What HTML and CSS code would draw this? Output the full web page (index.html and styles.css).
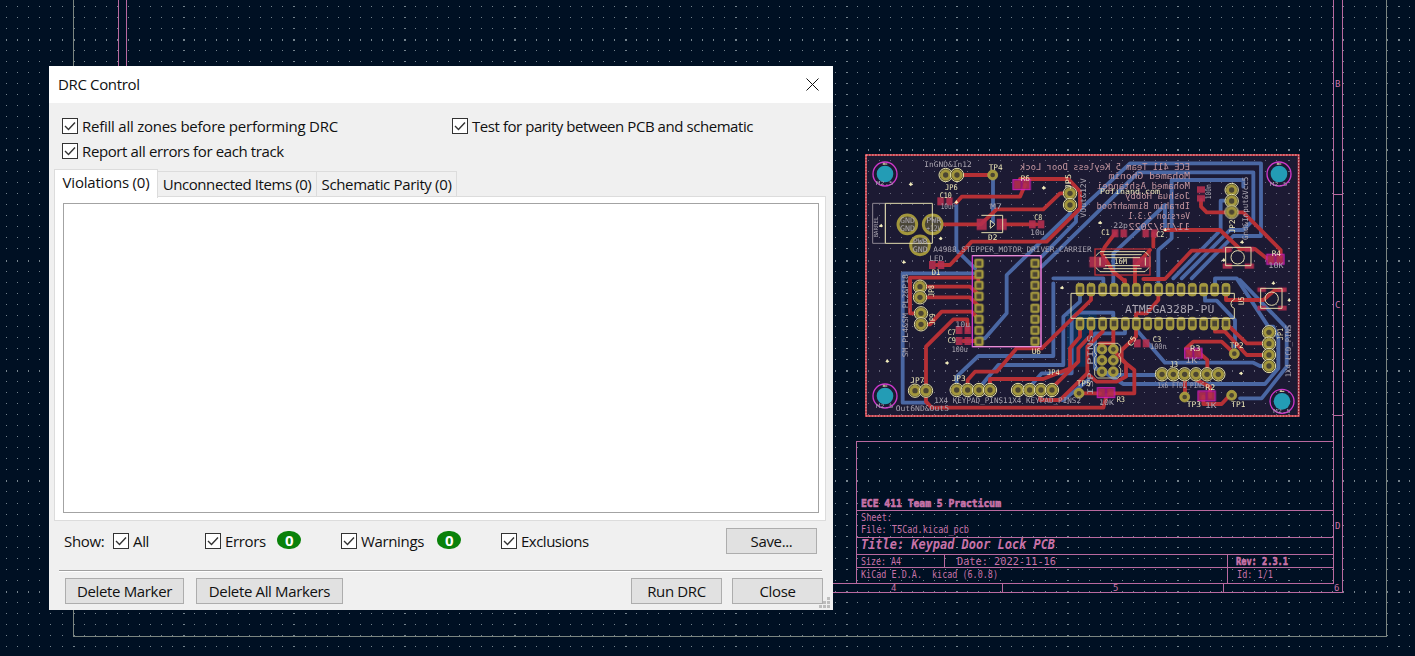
FILE: index.html
```html
<!DOCTYPE html>
<html lang="en">
<head>
<meta charset="utf-8">
<title>DRC Control</title>
<link rel="stylesheet" href="styles.css">
</head>
<body>
<main class="workspace">
<svg class="sheet" viewBox="0 0 1415 656" width="1415" height="656">
  <path id="grid" class="grid"/>
  <path class="page-edge" d="M73.5 0V636.5H1386.5V0"/>
  <path class="frame" d="M118.5 0V592.5H1342.5V0M126.5 0V583.5H1333.5V0M1333 194.5h9M1333 415.500h9M1333 441.500H856.500V583M856 510.500h477M856 537.500h477M856 554.500h477M856 567.500h477M944.500 554v13M1227.500 554v29M1002.500 583v9M1223.500 583v9"/>
  <g class="frame-text">
    <text class="heavy" x="861" y="507" textLength="140">ECE 411 Team 5 Practicum</text>
    <text x="861" y="520.500" textLength="31">Sheet:</text>
    <text x="861" y="532.500" textLength="108">File: T5Cad.kicad_pcb</text>
    <text class="title" x="861" y="549" textLength="194">Title: Keypad Door Lock PCB</text>
    <text x="861" y="565" textLength="40">Size: A4</text>
    <text x="957" y="565" textLength="99">Date: 2022-11-16</text>
    <text class="heavy" x="1236" y="565" textLength="52">Rev: 2.3.1</text>
    <text x="861" y="578" textLength="61">KiCad E.D.A.</text>
    <text x="932" y="578" textLength="66">kicad (6.0.8)</text>
    <text x="1237" y="578" textLength="36">Id: 1/1</text>
    <g class="ruler"><text x="891" y="591">4</text><text x="1113" y="591">5</text><text x="1334" y="591">6</text><text x="1335" y="87">B</text><text x="1335" y="308">C</text><text x="1335" y="529">D</text></g>
  </g>
</svg>
<svg class="board" viewBox="0 0 1320 810" width="440" height="270">
  <defs>
    <g id="pin"><circle r="20" class="ring"/><circle r="16" class="gold"/><circle r="8" class="hole"/></g>
    <g id="dip"><rect x="-12" y="-19" width="24" height="38" rx="9" class="gold"/><rect x="-7" y="-9" width="14" height="17" class="hole"/></g>
    <g id="sq"><rect x="-13" y="-13" width="26" height="26" rx="5" class="gold"/><rect x="-7" y="-7" width="14" height="14" class="hole"/></g>
    <g id="isp"><circle r="15" class="gold"/><circle r="7" class="hole"/></g>
    <g id="mount"><circle r="36" class="mask"/><circle r="25" class="drill"/><path class="silk" d="M-7-30h14M-3-34v6"/></g>
    <g id="power"><circle r="28" class="big-hole"/></g>
    <g id="smd"><rect x="-23" y="-12" width="20" height="24"/><rect x="3" y="-12" width="20" height="24"/></g>
    <g id="smd-mask"><rect x="-26" y="-15" width="52" height="30" class="mask-fill"/><use href="#smd"/></g>
  </defs>
  <rect class="zone" x="18" y="14" width="1300" height="786"/>
  <path id="board-grid" class="board-grid"/>
  <g class="pour"><path d="M620 480h90v70h-30v100h-60z"/></g>
  <g class="back">
    <path d="M399 90V215M289 160V300L345 355M128 370H340M128 370V758H200"/>
    <path d="M630 165V190L440 375V490L375 565H357"/>
    <path d="M545 320L648 215V190L810 40H1203V258H1120L995 385"/>
    <path d="M545 350L835 67H1180V210L1150 240H1110L965 385"/>
    <path d="M935 90H1150V110M935 90V265L895 300V400M1115 152H1082V240L940 385"/>
    <path d="M915 235V165L760 310V410"/>
    <path d="M1065 405V385H1130L1225 530H1240L1255 565V655L1215 702H790L730 665"/>
    <path d="M580 400V618H355L290 680V720M580 385H730V405"/>
    <path d="M660 420V455L610 500V645H415L357 715M760 520V488H655L635 505V670H545L510 710"/>
    <path d="M795 520V550H705V655L760 675H905M830 540L915 638H1180L1200 648H1227"/>
    <path d="M685 690L610 750H540M1035 420V452H1070L1125 510V590M1140 390L1280 535V650L1205 745H1140"/>
  </g>
  <g class="front">
    <path d="M290 75H398M289 158L305 140H480L495 105M245 223H362L410 178H550L600 130H625"/>
    <path d="M230 345H270L335 275H560L660 175V125L625 87H480M430 223H530M150 400V383H355V400"/>
    <path d="M765 250L735 290 725 310 760 365 790 390M870 300L825 350V400"/>
    <path d="M1023 150V170L1040 187H1150L1262 300V320M915 240H1080L1140 297H1185L1220 325M1105 302H995L915 387H850M880 250V290"/>
    <path d="M150 390V490H180M180 410H330L357 435M180 442H330L357 470M180 523H210L245 485H335L357 508M198 720V590L280 508H322V540M310 573H357"/>
    <path d="M198 720V755L215 773H730L740 735M323 715V690L345 665H410L470 595H545L693 450V420"/>
    <path d="M390 715V687H550L630 655V595L660 560V520M575 715L655 635V595L693 555V520M540 720V750H600L682 670V590L728 545V520"/>
    <path d="M682 670L710 695H770L798 680V640L760 600M720 600V580H760V520M828 520V560L785 600V630L823 660V730H750M660 730H720M828 520V490H860L895 450V425M795 390V420"/>
    <path d="M1098 425V450H1210L1245 420H1270M1065 520V545H1095L1160 615H1227M1098 520L1160 580H1227M990 610L978 595 1000 575H1085L1120 608M1020 610L1042 630V670M975 670V735M1010 673V690L1050 710V740M1030 740V762H1085L1110 735"/>
  </g>
  <g class="smds">
    <use href="#smd" x="255" y="154"/><use href="#smd" x="230" y="345"/><use href="#smd" x="530" y="223"/><use href="#smd" x="778" y="250"/><use href="#smd" x="870" y="250"/>
    <use href="#smd" x="310" y="540"/><use href="#smd" x="310" y="573"/><use href="#smd" transform="translate(1023 132) rotate(90)"/><use href="#smd" x="845" y="580"/>
    <use href="#smd-mask" x="485" y="104"/><use href="#smd-mask" x="738" y="728"/><use href="#smd-mask" x="1000" y="610"/><use href="#smd-mask" x="1040" y="738"/><use href="#smd-mask" x="1246" y="328"/>
    <rect x="350" y="206" width="30" height="34"/><rect x="410" y="206" width="30" height="34"/><rect x="688" y="320" width="52" height="32"/><rect x="818" y="320" width="52" height="32"/>
    <path d="M1088 290h28v16h-28zM1154 290h28v16h-28zM1088 340h28v16h-28zM1154 340h28v16h-28zM1192 412h26v14h-26zM1254 412h26v14h-26zM1192 467h26v14h-26zM1254 467h26v14h-26z"/>
  </g>
  <g>
    <use href="#mount" x="75" y="72"/><use href="#mount" x="1257" y="72"/><use href="#mount" x="75" y="738"/><use href="#mount" x="1266" y="754"/>
    <use href="#power" x="142" y="223"/><use href="#power" x="218" y="223"/><use href="#power" x="180" y="286"/>
    <use href="#pin" x="257" y="75"/><use href="#pin" x="291" y="75"/><use href="#isp" x="398" y="75"/>
    <use href="#pin" x="630" y="130"/><use href="#pin" x="630" y="165"/>
    <use href="#pin" x="1115" y="120"/><use href="#pin" x="1115" y="153"/><use href="#pin" x="1115" y="186"/>
    <use href="#pin" x="180" y="410"/><use href="#pin" x="180" y="442"/><use href="#pin" x="183" y="490"/><use href="#pin" x="183" y="523"/>
    <use href="#pin" x="165" y="722"/><use href="#pin" x="198" y="722"/>
    <use href="#pin" x="290" y="720"/><use href="#pin" x="323" y="720"/><use href="#pin" x="357" y="720"/><use href="#pin" x="390" y="720"/>
    <use href="#pin" x="474" y="720"/><use href="#pin" x="509" y="720"/><use href="#pin" x="543" y="720"/><use href="#pin" x="576" y="720"/>
    <use href="#isp" x="657" y="730"/><use href="#isp" x="1123" y="611"/><use href="#isp" x="974" y="741"/><use href="#isp" x="1115" y="736"/>
    <use href="#pin" x="906" y="673"/><use href="#pin" x="940" y="673"/><use href="#pin" x="974" y="673"/><use href="#pin" x="1008" y="673"/><use href="#pin" x="1041" y="673"/><use href="#pin" x="1075" y="673"/>
    <use href="#pin" x="1227" y="547"/><use href="#pin" x="1227" y="581"/><use href="#pin" x="1227" y="615"/><use href="#pin" x="1227" y="648"/>
    <use href="#isp" x="726" y="598"/><use href="#isp" x="760" y="598"/><use href="#isp" x="726" y="631"/><use href="#isp" x="760" y="631"/><use href="#isp" x="726" y="665"/><use href="#isp" x="760" y="665"/>
    <use href="#sq" x="357" y="340"/><use href="#sq" x="357" y="373"/><use href="#sq" x="357" y="406"/><use href="#sq" x="357" y="439"/><use href="#sq" x="357" y="475"/><use href="#sq" x="357" y="508"/><use href="#sq" x="357" y="541"/><use href="#sq" x="357" y="574"/>
    <use href="#sq" x="525" y="340"/><use href="#sq" x="525" y="373"/><use href="#sq" x="525" y="406"/><use href="#sq" x="525" y="439"/><use href="#sq" x="525" y="475"/><use href="#sq" x="525" y="508"/><use href="#sq" x="525" y="541"/><use href="#sq" x="525" y="574"/>
    <g id="dip-row">
      <use href="#dip" x="660" y="419"/><use href="#dip" x="693" y="419"/><use href="#dip" x="728" y="419"/><use href="#dip" x="762" y="419"/><use href="#dip" x="796" y="419"/><use href="#dip" x="829" y="419"/><use href="#dip" x="863" y="419"/><use href="#dip" x="896" y="419"/><use href="#dip" x="930" y="419"/><use href="#dip" x="963" y="419"/><use href="#dip" x="997" y="419"/><use href="#dip" x="1031" y="419"/><use href="#dip" x="1064" y="419"/><use href="#dip" x="1098" y="419"/>
    </g>
    <use href="#dip-row" y="102"/>
  </g>
  <g class="silk">
    <path d="M38 160h38v120h-38z" class="gray-line"/><path d="M76 160H217V280H76zM364 196h64v52h-64M391 211l14 12-14 12zM633 505V430H1123V448M633 505H1123V475M1123 448a14 14 0 0 0 0 27M1097 292h76v55h-76zM1202 415h64v60h-64z"/>
    <circle cx="1133" cy="322" r="20"/><circle cx="1235" cy="446" r="20"/>
    <path d="M720 305h135l15 15v30l-15 15H720l-15-15v-30zM730 314h115M730 356h115M735 323h105M735 347h105M720 323v24M856 323v24"/>
    <path class="thin" d="M712 580h62l8 9v18l-6 8 6 8v18l-6 8 6 8v18l-8 9h-62l-8-9v-18l6-8-6-8v-18l6-8-6-8v-18z"/>
  </g>
  <rect class="fab-red" x="705" y="297" width="165" height="78"/>
  <rect class="mask" x="337" y="317" width="206" height="273"/>
  <path class="courtyard" d="M337 317H543V590H337"/>
  <path class="vias" d="M148 102h9v2h-9zM152 98h1v9h-1zM238 265h8v2h-8zM242 261h1v8h-1zM128 336h8v2h-8zM131 332h1v8h-1zM547 113h9v2h-9zM551 109h1v9h-1zM716 218h9v2h-9zM720 214h1v8h-1zM285 156h8v2h-8zM289 152h1v8h-1zM59 227h8v2h-8zM63 223h1v8h-1zM78 633h8v2h-8zM81 629h1v8h-1zM257 638h8v2h-8zM261 635h1v8h-1zM602 413h8v2h-8zM606 409h1v8h-1zM1139 669h8v2h-8zM1143 666h1v8h-1zM1236 399h8v2h-8zM1240 395h1v8h-1zM1284 450h7v2h-7zM1287 446h1v8h-1zM1142 276h8v2h-8zM1146 272h1v8h-1zM1087 330h8v2h-8zM1091 326h1v8h-1zM912 239h7v2h-7zM915 235h1v8h-1z"/>
  <g class="gray">
    <text x="193" y="52" textLength="142">InGND&amp;In12</text><text x="242" y="177" textLength="44">10uF</text><text x="510" y="254" textLength="44">10u</text><text class="small" x="48" y="106" textLength="52">M2.5</text>
    <text x="120" y="218" textLength="45">GND</text><text x="120" y="244" textLength="45">GND</text><text x="199" y="218" textLength="45">PWR</text><text x="199" y="244" textLength="45">+12V</text><text x="158" y="281" textLength="45">PWR</text><text x="158" y="305" textLength="45">GND</text>
    <text x="220" y="307" textLength="475">A4988_STEPPER_MOTOR_DRIVER_CARRIER</text><text x="208" y="332" textLength="42">LED</text><text x="390" y="178" textLength="36">M7</text>
    <text transform="translate(678 203) rotate(-90)" textLength="118">VOut&amp;12V</text><text transform="translate(1163 270) rotate(-90)" textLength="190">Gnd&amp;Input&amp;Vcc5</text><text transform="translate(1053 148) rotate(-90)" textLength="45">100n</text>
    <text class="large" x="795" y="489" textLength="268">ATMEGA328P-PU</text><text x="1225" y="355" textLength="46">10K</text><text x="760" y="234" textLength="44">22p</text><text class="bright" x="763" y="343" textLength="38">16M</text>
    <text transform="translate(144 622) rotate(-90)" textLength="250">SM_PL4&amp;SM_PL2&amp;P18</text><text x="286" y="530" textLength="45">10u</text><text x="275" y="605" textLength="48">100u</text><text x="223" y="760" textLength="440">1X4 KEYPAD_PINS11X4 KEYPAD_PINS2</text><text x="107" y="784" textLength="160">Out6ND&amp;Out5</text>
    <text transform="translate(698 735) rotate(-90)" textLength="180">ISP PINS</text><text x="717" y="765" textLength="45">10K</text><text x="975" y="638" textLength="38">1K</text><text x="1035" y="773" textLength="35">1K</text><text x="892" y="715" textLength="142">1x6 FTDI_PINS</text><text transform="translate(1292 682) rotate(-90)" textLength="158">1X4 LCD_PINS</text><text x="870" y="596" textLength="50">100n</text><text class="small" transform="translate(53 262) rotate(-90)" textLength="62">BARREL</text>
    <text class="small" x="48" y="774" textLength="52">M2.5</text><text class="small" x="1230" y="108" textLength="52">M2.5</text><text class="small" x="1240" y="789" textLength="52">M2.5</text>
  </g>
  <g class="label">
    <text x="386" y="60" textLength="42">TP4</text><text x="255" y="120" textLength="38">JP6</text><text x="239" y="145" textLength="36">C10</text><text x="384" y="271" textLength="28">D2</text><text x="215" y="374" textLength="26">D1</text><text x="482" y="92" textLength="28">R6</text><text transform="translate(632 118) rotate(-90)" textLength="46">JP5</text><text x="523" y="211" textLength="24">C8</text><text x="724" y="256" textLength="25">C1</text><text x="720" y="132" textLength="180">Pofinand.com</text>
    <text transform="translate(1124 250) rotate(-90)" textLength="42">JP2</text><text x="1235" y="317" textLength="28">R4</text><text x="889" y="261" textLength="24">C2</text><text transform="translate(222 440) rotate(-90)" textLength="35">JP8</text><text transform="translate(226 525) rotate(-90)" textLength="35">JP9</text><text x="263" y="555" textLength="25">C7</text><text x="263" y="580" textLength="25">C9</text><text x="151" y="698" textLength="42">JP7</text><text x="275" y="693" textLength="42">JP3</text><text x="515" y="611" textLength="28">U6</text><text x="561" y="675" textLength="38">JP4</text><text x="650" y="708" textLength="42">TP5</text><text x="770" y="755" textLength="25">R3</text>
    <text transform="translate(815 590) rotate(-60)" textLength="30">C5</text><text x="878" y="576" textLength="26">C3</text><text x="990" y="604" textLength="32">R3</text><text x="1109" y="594" textLength="42">TP2</text><text x="930" y="650" textLength="24">J3</text><text x="1036" y="721" textLength="30">R2</text><text x="980" y="772" textLength="43">TP3</text><text x="1114" y="770" textLength="42">TP1</text><text transform="translate(1269 570) rotate(-90)" textLength="36">JP1</text><text transform="translate(1152 465) rotate(-90)" textLength="25">U5</text>
  </g>
  <g class="mirror" transform="translate(990 0) scale(-1 1)">
    <text y="60" textLength="510">ECE 411 Team 5 Keyless Door Lock</text><text y="88" textLength="245">Mohamed Ghonim</text><text y="117" textLength="280">Mohamed Ashtangei</text><text y="147" textLength="195">Joshua Hobby</text><text y="177" textLength="280">Ibrahim Binmahfood</text><text y="208" textLength="185">Version 2.3.1</text><text y="240" textLength="185">11/13/2022</text>
  </g>
  <rect class="outline-base" x="18" y="15" width="1298" height="783"/>
  <rect class="outline" x="18" y="15" width="1298" height="783"/>
</svg>

<section class="dialog">
  <header class="titlebar"><h1>DRC Control</h1><svg class="close" width="13" height="13"><path d="M.5.5l12 12M12.500.5l-12 12"/></svg></header>
  <div class="options">
    <label class="opt"><i class="box"></i><span class="refill">Refill all zones before performing DRC</span></label>
    <label class="opt"><i class="box"></i><span class="parity-test">Test for parity between PCB and schematic</span></label>
    <label class="opt"><i class="box"></i><span class="report">Report all errors for each track</span></label>
  </div>
  <nav class="tabs"><span class="tab on">Violations (0)</span><span class="tab unconnected">Unconnected Items (0)</span><span class="tab parity">Schematic Parity (0)</span></nav>
  <div class="panel"><div class="list"></div></div>
  <div class="filters">
    <span class="show">Show:</span>
    <label class="opt all"><i class="box"></i><span>All</span></label>
    <label class="opt errors"><i class="box"></i><span>Errors</span></label><b class="badge">0</b>
    <label class="opt warnings"><i class="box"></i><span>Warnings</span></label><b class="badge">0</b>
    <label class="opt exclusions"><i class="box"></i><span>Exclusions</span></label>
    <button class="save">Save...</button>
  </div>
  <hr>
  <footer class="actions"><button class="delete">Delete Marker</button><button class="delete-all">Delete All Markers</button><button class="run">Run DRC</button><button class="done">Close</button></footer>
  <svg class="grip" width="11" height="11"><path d="M8 0h3v3H8zM4 4h3v3H4zM8 4h3v3H8zM0 8h3v3H0zM4 8h3v3H4zM8 8h3v3H8z"/></svg>
</section>
</main>
<script src="grid.js"></script>
</body>
</html>
```

FILE: grid.js
```js
const STEP = 11.045;
let dots = "";
let boardDots = "";
for (let i = 0; i < 129; i++) {
  const x = Math.floor(6.8 + i * STEP);
  const w = i % 10 === 6 ? 2 : 1;
  for (let j = 0; j < 60; j++) {
    const y = Math.floor(6 + j * STEP);
    const h = j % 10 === 3 ? 2 : 1;
    dots += `M${x} ${y}h${w}v${h}h-${w}z`;
    if (x > 866 && x < 1298 && y > 155 && y < 416) {
      boardDots += `M${(x - 860) * 3} ${(y - 150) * 3}h${w * 3}v${h * 3}h-${w * 3}z`;
    }
  }
}
document.getElementById("grid").setAttribute("d", dots);
document.getElementById("board-grid").setAttribute("d", boardDots);

document.querySelectorAll("text[textLength]").forEach((t) => {
  t.setAttribute("lengthAdjust", "spacingAndGlyphs");
});
// Each checkbox carries the same tick mark.
document.querySelectorAll(".box").forEach((box) => {
  box.innerHTML = '<svg width="14" height="14"><path d="M2 7l3.500 3.500L12 3.500"/></svg>';
});
```

FILE: styles.css
```css
body { margin: 0; background: #001023; overflow: hidden; }
.workspace { position: relative; width: 1415px; height: 656px; background: #001023; }
.sheet, .board { position: absolute; left: 0; top: 0; }
.board { left: 860px; top: 150px; }
.grid { fill: #75838d; shape-rendering: crispEdges; }
.page-edge { fill: none; stroke: #7b8580; shape-rendering: crispEdges; }
.frame { fill: none; stroke: #b9699f; shape-rendering: crispEdges; }
.frame-text { fill: #c873a9; font: 10.500px "DejaVu Sans Mono", monospace; }
.heavy { font-weight: bold; font-size: 10.500px; stroke: #c873a9; stroke-width: .6px; }
.title { font-weight: bold; font-style: italic; font-size: 13.500px; }
.ruler { font-size: 9px; }

.zone { fill: #1c1a33; }
.board-grid { fill: #66667a; }
.pour { fill: #003b68; opacity: .6; }
.back, .front { fill: none; stroke-width: 11.500; stroke-linejoin: round; stroke-linecap: round; }
.back { stroke: #4a67a3; }
.front { stroke: #b53035; }
.smds { fill: #b52f4f; opacity: .9; }
.mask-fill { fill: #a01582; stroke: #dd24c4; stroke-width: 3; }
.ring { fill: #393528; stroke: #e2dda6; stroke-width: 3; }
.gold { fill: #a2963c; stroke: #b4a84c; stroke-width: 2; }
.hole { fill: #4b4533; }
.big-hole { fill: #4a4638; stroke: #a2963c; stroke-width: 9; }
.mask { fill: none; stroke: #cf38cc; stroke-width: 4; }
.courtyard { fill: none; stroke: #f0b6d8; stroke-width: 2.500; }
.drill { fill: #239cb5; }
.silk { fill: none; stroke: #e3dcae; stroke-width: 3; }
.gray-line { stroke: #8e8792; }
.fab-red { fill: none; stroke: #ba3138; stroke-width: 4; }
.vias { fill: #f2edbd; stroke: #f2edbd; stroke-width: 3; }
.gray, .label, .mirror { font: 23px "DejaVu Sans Mono", monospace; }
.gray { fill: #aaa5b0; }
.small { font-size: 17px; }
.bright { fill: #ece6b5; }
.large { font-size: 33px; }
.label { fill: #f0eaba; }
.mirror { fill: #c597a0; font-size: 25px; }
.thin { stroke-width: 2.500; }
.outline-base, .outline { fill: none; stroke-width: 6; }
.outline-base { stroke: #b93440; }
.outline { stroke: #e8adb0; stroke-width: 3; stroke-dasharray: 5 4; }

.dialog { position: absolute; left: 49px; top: 66px; width: 784px; height: 544px; box-sizing: border-box; display: flex; flex-direction: column; background: #f0f0f0; color: #111; font: 15px/20px "Open Sans", sans-serif; letter-spacing: -.35px; }
.titlebar { height: 37px; flex: none; box-sizing: border-box; background: #fff; display: flex; align-items: center; justify-content: space-between; padding: 0 14px 2px 9px; }
h1 { font: inherit; margin: 0; }
.close { stroke: #111; fill: none; margin-top: 1px; }
.options { height: 66px; box-sizing: border-box; flex: none; display: grid; grid-template-columns: 390px 1fr; grid-template-rows: 25px 25px; padding: 10px 13px 0; }
.opt { display: flex; align-items: center; gap: 4px; white-space: nowrap; }
.refill { letter-spacing: -.24px; }
.parity-test { letter-spacing: -.44px; }
.report { letter-spacing: -.38px; }
.box { width: 14px; height: 14px; flex: none; border: 1px solid #333; background: #fff; }
.box svg { display: block; fill: none; stroke: #333; stroke-width: 1.400; }
.tabs { height: 28px; flex: none; display: flex; align-items: flex-end; padding-left: 5px; }
.tab { box-sizing: border-box; height: 26px; line-height: 24px; border: 1px solid #dcdcdc; border-left: 0; border-bottom: 0; text-align: center; white-space: nowrap; }
.tab.on { position: relative; z-index: 1; width: 104px; height: 29px; line-height: 25px; margin-bottom: -1px; border-left: 1px solid #dcdcdc; background: #fff; letter-spacing: -.2px; }
.unconnected { width: 159px; letter-spacing: -.42px; }
.parity { width: 140px; }
.panel { margin: -1px 7px 0 5px; height: 325px; flex: none; box-sizing: border-box; border: 1px solid #dcdcdc; background: #fff; padding: 6px 6px 7px 8px; }
.list { height: 310px; box-sizing: border-box; border: 1px solid #a3a3a3; }
.filters { height: 41px; flex: none; box-sizing: border-box; display: flex; align-items: center; padding: 0 16px 2px 15px; }
.show { width: 49px; }
.all { width: 92px; }
.errors { width: 72px; }
.badge { width: 24px; height: 18px; border-radius: 11px / 9px; background: #0a820a; color: #fff; text-align: center; line-height: 18px; margin-top: -2px; }
.warnings { width: 96px; margin-left: 40px; }
.exclusions { margin-left: 40px; letter-spacing: -.5px; }
button { box-sizing: border-box; height: 26px; padding: 0; border: 1px solid #adadad; background: #e1e1e1; color: inherit; font: inherit; letter-spacing: inherit; }
.save { width: 91px; margin-left: auto; }
hr { width: 763px; margin: 8px 0 0 10px; border: 0; border-top: 1px solid #a0a0a0; border-bottom: 1px solid #fff; flex: none; }
.actions { display: flex; padding: 6px 10px 0 16px; }
.delete { width: 119px; }
.delete-all { width: 147px; margin-left: 12px; }
.run { width: 91px; margin-left: auto; }
.done { width: 91px; margin-left: 10px; }
.grip { position: absolute; right: 3px; bottom: 2px; fill: #bdbdbd; }
```
